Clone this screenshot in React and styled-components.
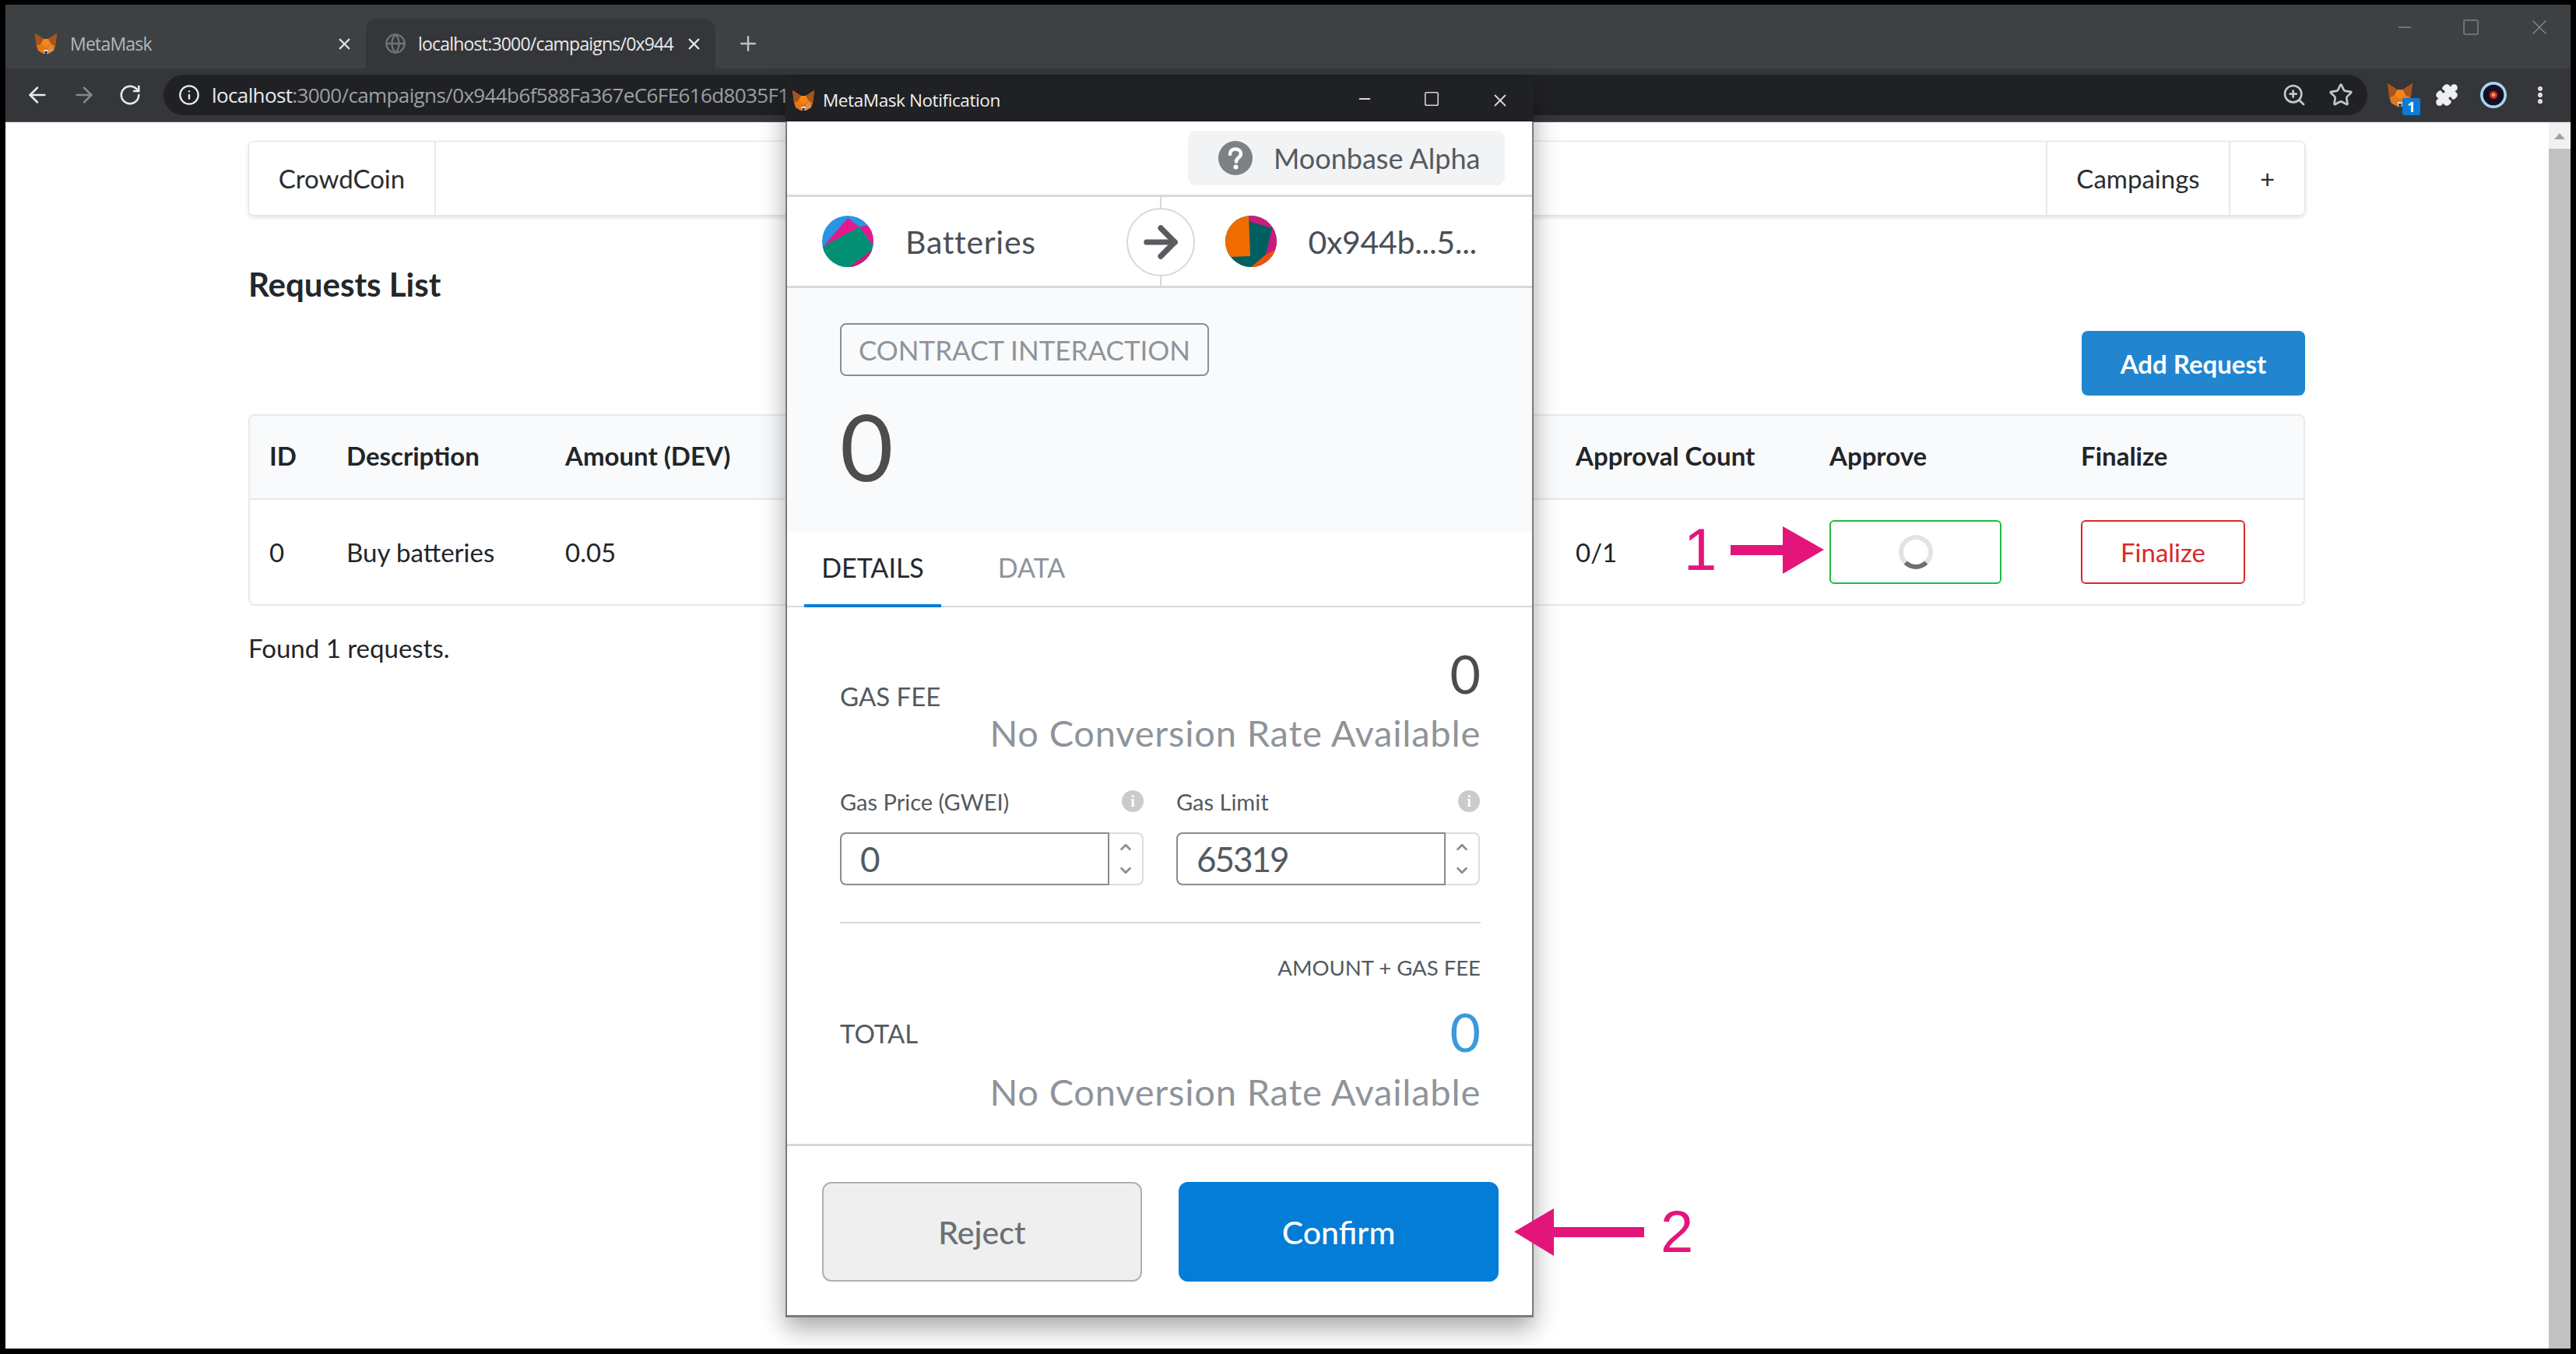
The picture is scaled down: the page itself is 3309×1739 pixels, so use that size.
import React from 'react';
import styled, { createGlobalStyle } from 'styled-components';
import { ArrowLeft, ArrowRight, RotateCw, Info, X, Plus, Globe, ZoomIn, Star, Puzzle, MoreVertical, Minus, Square, ChevronUp, ChevronDown } from 'lucide-react';

const Global = createGlobalStyle`
  html, body { margin: 0; padding: 0; background: #000; }
  * { box-sizing: border-box; }
`;

const Frame = styled.div`
  position: relative; width: 3309px; height: 1739px; background: #000;
  padding: 6px 7px 7px 7px; overflow: hidden;
  display: flex; flex-direction: column;
`;
const TabStrip = styled.div`
  height: 82px; background: #3e4144; display: flex; align-items: flex-end; padding-top: 18px; flex: none;
  font-family: "Open Sans", sans-serif; font-size: 23px; letter-spacing: -0.8px;
`;
const Tab = styled.div`
  display: flex; align-items: center; height: 64px; padding: 0 ${p => p.$pr}px 0 ${p => p.$pl}px;
  width: ${p => p.$w}px; flex: none; border-radius: 14px 14px 0 0;
  background: ${p => p.$active ? '#35363a' : 'transparent'};
  color: ${p => p.$active ? '#e8eaed' : '#b4b7bb'};
`;
const TabTitle = styled.span`
  flex: 1; min-width: 0; white-space: nowrap; margin-left: ${p => p.$ml}px;
`;
const NewTab = styled.div`
  margin-left: 20px; width: 44px; height: 64px; display: flex; align-items: center; justify-content: center; color: #bdc1c6;
`;
const WinControls = styled.div`
  margin-left: auto; align-self: flex-start; display: flex; align-items: center; gap: 60px; padding: 0 24px 0 0; margin-top: -5px; color: #7f8285;
`;
const Toolbar = styled.div`
  height: 69px; background: #35363a; flex: none; display: flex; align-items: center; padding: 0 10px 0 25px;
  border-bottom: 1px solid #55575a;
`;
const NavIcon = styled.span`
  width: 60px; display: flex; color: ${p => p.$dim ? '#85888c' : '#e8eaed'}; flex: none;
`;
const Omnibox = styled.div`
  margin-left: -2px; width: 2831px; height: 52px; border-radius: 26px; background: #202124; flex: none;
  display: flex; align-items: center; padding: 0 0 0 19px; color: #e8eaed; position: relative;
`;
const Url = styled.span`
  margin-left: 15px; font-family: "Open Sans", sans-serif; font-size: 26px; letter-spacing: -0.62px; white-space: nowrap; color: #e8eaed;
  & > em { font-style: normal; color: #9aa0a6; }
`;
const OmniEnd = styled.div`
  margin-left: auto; display: flex; gap: 28px; align-items: center; padding-right: 18px; color: #c4c7ca;
`;
const ExtArea = styled.div`
  display: flex; align-items: center; flex: none; margin-left: 25px; gap: 26px; color: #eef0f2;
`;
const ExtSlot = styled.span`
  position: relative; display: flex; width: 34px; height: 34px; align-items: center; justify-content: center;
`;
const ExtBadge = styled.span`
  position: absolute; right: -9px; bottom: -9px; width: 23px; height: 22px; background: #0a7bd6; color: #fff; border-radius: 2px;
  font: 700 18px/22px "Open Sans", sans-serif; text-align: center; letter-spacing: 0;
`;
const Viewport = styled.div`
  flex: 1; min-height: 0; background: #fff; display: flex;
`;
const Page = styled.div`
  flex: 1; min-width: 0; padding: 24px 313px 0 312px;
  font-family: Lato, sans-serif; color: #212529; font-size: 33px;
`;
const Scrollbar = styled.div`
  width: 28px; flex: none; background: #f1f1f1; display: flex; flex-direction: column; align-items: center; padding-top: 14px;
`;
const ScrollArrow = styled.div`
  width: 0; height: 0; border-left: 7px solid transparent; border-right: 7px solid transparent; border-bottom: 8px solid #a3a3a3;
`;
const ScrollThumb = styled.div`
  width: 100%; flex: 1; background: #c1c1c1; margin-top: 12px;
`;
const Menu = styled.div`
  height: 96px; border: 1px solid #e2e3e4; border-radius: 7px; box-shadow: 0 2px 5px rgba(34,36,38,.15);
  display: flex; background: #fff;
`;
const MenuItem = styled.div`
  display: flex; align-items: center; justify-content: center; width: ${p => p.$w}px;
  ${p => p.$right ? 'border-left: 2px solid #e9e9ea;' : 'border-right: 2px solid #e9e9ea;'}
  color: #2b2d2f;
`;
const MenuRight = styled.div`
  margin-left: auto; display: flex;
`;
const PageTitle = styled.h2`
  margin: 63px 0 0; font-size: 42px; line-height: 50px; font-weight: 700; color: #23272b;
`;
const ActionRow = styled.div`
  display: flex; justify-content: flex-end; margin-top: 35px;
`;
const AddButton = styled.button`
  width: 287px; height: 83px; border: 0; border-radius: 8px; background: #2185d0; color: #fff;
  font: 700 33px Lato, sans-serif;
`;
const Table = styled.div`
  margin-top: 24px; border: 2px solid #e8e9ea; border-radius: 8px; overflow: hidden;
`;
const TableRow = styled.div`
  display: grid; grid-template-columns: 99px 281px 1298px 326px 323px 1fr; align-items: center; padding-left: 25px;
  height: ${p => p.$head ? 108 : 134}px;
  ${p => p.$head ? 'background: #f9fafb; border-bottom: 2px solid #e8e9ea; font-weight: 700; padding-bottom: 4px;' : ''}
`;
const FoundText = styled.p`
  margin: 34px 0 0; line-height: 40px;
`;
const OutlineButton = styled.button`
  height: 82px; width: ${p => p.$w}px; background: #fff; border: 2px solid ${p => p.$color}; border-radius: 6px;
  color: ${p => p.$color}; font: 33px Lato, sans-serif; display: flex; align-items: center; justify-content: center; padding: 0;
`;
const Spinner = styled.span`
  width: 44px; height: 44px; border-radius: 50%; border: 6px solid #e3e3e3; border-bottom-color: #6e6e6e;
`;

/* MetaMask window */
const Popup = styled.div`
  position: absolute; left: 1009px; top: 101px; width: 961px; height: 1591px; background: #fff;
  box-shadow: 0 14px 30px rgba(0,0,0,.35); border: solid #7a7a7a; border-width: 0 2px 3px 2px;
  display: flex; flex-direction: column; font-family: Lato, sans-serif; color: #535a61;
`;
const PopTitle = styled.div`
  height: 55px; flex: none; background: #202124; margin: 0 -2px; display: flex; align-items: center; padding: 0 0 0 8px;
  color: #f1f1f1; font: 22.5px "Open Sans", sans-serif; letter-spacing: -0.4px;
`;
const PopTitleText = styled.span` margin-left: 10px; `;
const PopWinBtns = styled.div`
  margin-left: auto; display: flex; gap: 64px; padding-right: 30px; color: #d8d8d8;
`;
const NetBar = styled.div`
  height: 97px; flex: none; display: flex; justify-content: flex-end; align-items: flex-start; padding: 12px 35px 0 0;
  border-bottom: 3px solid #d6d9dc;
`;
const NetPill = styled.div`
  width: 407px; height: 70px; border-radius: 10px; background: #f2f3f4; display: flex; align-items: center; padding-left: 39px;
  font-size: 36px; color: #535a61; gap: 27px;
`;
const Parties = styled.div`
  position: relative; height: 117px; flex: none; display: flex; align-items: center; border-bottom: 3px solid #d6d9dc; font-size: 41px; color: #4a4f55;
`;
const Party = styled.div`
  flex: 1; display: flex; align-items: center; padding-left: ${p => p.$pl}px; gap: ${p => p.$gap}px; letter-spacing: ${p => p.$ls}px;
`;
const ArrowCircle = styled.div`
  position: absolute; left: 436px; top: 14px; width: 88px; height: 88px; border-radius: 50%; border: 2px solid #d6d9dc; background: #fff;
  display: flex; align-items: center; justify-content: center; color: #595b5e;
`;
const VLine = styled.div`
  position: absolute; left: 479px; width: 2px; height: 14px; background: #d6d9dc; top: ${p => p.$top}px;
`;
const Summary = styled.div`
  height: 314px; flex: none; background: #f9fafb; padding: 45px 0 0 68px;
`;
const Badge = styled.div`
  width: 474px; height: 68px; border: 2px solid #8a8f94; border-radius: 8px; display: flex; align-items: center; justify-content: center;
  font-size: 35px; color: #8e949a; white-space: nowrap;
`;
const BigZero = styled.div`
  font-size: 118px; line-height: 120px; margin-top: 30px; color: #4d4d4d; font-weight: 400;
`;
const Tabs = styled.div`
  height: 96px; flex: none; display: flex; border-bottom: 2px solid #d6d9dc; padding-left: 22px;
`;
const TabLink = styled.div`
  width: 176px; height: 96px; display: flex; align-items: center; justify-content: center; font-size: 34px;
  color: ${p => p.$active ? '#24292e' : '#8e949a'};
  ${p => p.$active ? 'border-bottom: 4px solid #037dd6; padding-bottom: 4px;' : 'padding-bottom: 8px;'}
  margin-right: ${p => p.$mr || 0}px;
`;
const Details = styled.div`
  flex: 1; padding: 0 66px 0 68px; display: flex; flex-direction: column;
`;
const FeeRow = styled.div`
  display: flex; flex-direction: column;
`;
const FeeTop = styled.div`
  display: flex; justify-content: space-between; align-items: center; height: ${p => p.$h}px; margin-top: ${p => p.$mt}px;
`;
const FeeLabel = styled.span`
  font-size: 33px; color: #535a61; margin-top: ${p => p.$drop || 0}px;
`;
const FeeValue = styled.span`
  font-size: 68px; line-height: 68px; color: ${p => p.$blue ? '#3b99dc' : '#4d4d4d'};
`;
const Conversion = styled.div`
  text-align: right; font-size: 47px; line-height: 56px; margin-top: ${p => p.$mt}px; color: #8e949a; white-space: nowrap; letter-spacing: 0.8px;
`;
const GasGrid = styled.div`
  display: grid; grid-template-columns: 390px 390px; gap: 42px; margin-top: 42px;
`;
const GasField = styled.div` display: flex; flex-direction: column; `;
const GasLabel = styled.div`
  display: flex; justify-content: space-between; align-items: center; height: 36px; font-size: 29px; color: #535a61; padding-right: 0;
`;
const InfoDot = styled.span`
  width: 28px; height: 28px; border-radius: 50%; background: #c9cbcd; color: #fff; text-align: center;
  font: 700 20px/28px "Liberation Serif", serif;
`;
const Stepper = styled.div`
  display: flex; height: 68px; margin-top: 22px; border: 2px solid #dcdcdc; border-radius: 8px;
`;
const GasInput = styled.div`
  width: 346px; margin: -2px 0 -2px -2px; border: 2px solid #898d91; border-radius: 8px 0 0 8px;
  font-size: 44px; line-height: 64px; padding-left: 24px; color: #535a61; letter-spacing: -2px;
`;
const Spin = styled.div`
  flex: 1; display: flex; flex-direction: column; align-items: center; justify-content: center; gap: 8px; color: #8a8f94;
`;
const Rule = styled.div`
  height: 2px; background: #d6d9dc; margin-top: 47px;
`;
const AmountNote = styled.div`
  text-align: right; font-size: 27.5px; line-height: 36px; margin-top: 39px; color: #535a61;
`;
const Footer = styled.div`
  height: 220px; flex: none; border-top: 3px solid #d6d9dc; display: flex; gap: 47px; padding: 46px 0 0 45px;
`;
const FootBtn = styled.button`
  width: 411px; height: 128px; border-radius: 12px; font: 500 41px Lato, sans-serif;
  border: ${p => p.$primary ? '0' : '2px solid #b0b0b0'};
  background: ${p => p.$primary ? '#037dd6' : '#efefef'};
  color: ${p => p.$primary ? '#fff' : '#6b7075'};
`;
const Callout = styled.div`
  position: absolute; left: ${p => p.$x}px; top: ${p => p.$y}px; display: flex; align-items: center; gap: ${p => p.$gap}px;
  font: 76px/76px "Liberation Sans", sans-serif; color: #e3157a;
`;

const Fox = ({ size = 30 }) => (
  <svg width={size} height={size} viewBox="0 0 30 30">
    <polygon points="1,2 12,9 18,9 29,2 27,18 25,24 18,28 12,28 5,24 3,18" fill="#e2761b" />
    <polygon points="1,2 12,9 9,15 3,18" fill="#a8541a" />
    <polygon points="29,2 18,9 21,15 27,18" fill="#a8541a" />
    <polygon points="12,9 18,9 21,15 15,20 9,15" fill="#f6851b" />
    <polygon points="5,24 12,28 12,23 9,15" fill="#e4761b" />
    <polygon points="25,24 18,28 18,23 21,15" fill="#d7c1b3" opacity=".35" />
    <polygon points="12,23 18,23 17,28 13,28" fill="#e8dcd2" />
    <polygon points="13,25 17,25 16,28 14,28" fill="#2b2b2b" />
  </svg>
);

const Jazzicon = ({ variant }) => (
  <svg width="66" height="66" viewBox="0 0 66 66">
    <defs>
      <clipPath id={`j${variant}`}><circle cx="33" cy="33" r="33" /></clipPath>
    </defs>
    {variant === 'a' ? (
      <g clipPath="url(#ja)">
        <rect width="66" height="66" fill="#2a95e2" />
        <polygon points="33,3 48,14.600 2,39" fill="#e6188e" />
        <polygon points="48,14.600 58,12 68,24 66,39" fill="#e6188e" />
        <polygon points="-4,42 48,14.600 66,39 66,44 35,66 0,66" fill="#038f73" />
        <polygon points="35,66 64,44 68,68" fill="#c81d7d" />
      </g>
    ) : (
      <g clipPath="url(#jb)">
        <rect width="66" height="66" fill="#005f5f" />
        <polygon points="-2,-2 30,-2 32,52 5,53 -2,50" fill="#f06c00" />
        <polygon points="30,-2 30,7 60,16 68,-2" fill="#c81d7d" />
        <polygon points="60,16 68,16 68,44 52,50" fill="#c81d7d" />
        <polygon points="33,66 52,50 64,44 68,68" fill="#f2500a" />
      </g>
    )}
  </svg>
);

const Qmark = () => (
  <svg width="44" height="44" viewBox="0 0 44 44">
    <circle cx="22" cy="22" r="22" fill="#7d8185" />
    <path d="M15 17c0-4 3-6.500 7-6.500s7 2.500 7 6c0 5-6 5-6 10" fill="none" stroke="#fff" strokeWidth="4.500" strokeLinecap="round" />
    <circle cx="22.500" cy="33.500" r="3" fill="#fff" />
  </svg>
);

const CalloutArrow = ({ dir }) => (
  <svg width={dir === 'r' ? 120 : 167} height="61" viewBox={dir === 'r' ? '0 0 120 61' : '0 0 167 61'}>
    {dir === 'r'
      ? <polygon points="0,24 67,24 67,0 120,30 67,61 67,37 0,37" fill="#e3157a" />
      : <polygon points="167,24 51,24 51,0 0,30 51,61 51,37 167,37" fill="#e3157a" />}
  </svg>
);

const Avatar = () => (
  <svg width="42" height="42" viewBox="0 0 42 42">
    <circle cx="21" cy="21" r="21" fill="#a9d3f1" />
    <circle cx="21" cy="21" r="16.500" fill="#14111d" />
    <circle cx="21" cy="21" r="6.500" fill="#c2213f" />
    <circle cx="21" cy="21" r="3" fill="#f9a43a" />
  </svg>
);

export default function App() {
  return (
    <>
      <Global />
      <Frame>
        <TabStrip>
          <Tab $w={463} $pl={37} $pr={16}>
            <Fox />
            <TabTitle $ml={16}>MetaMask</TabTitle>
            <X size={23} strokeWidth={2.500} color="#dfe1e5" />
          </Tab>
          <Tab $active $w={449} $pl={24} $pr={16}>
            <Globe size={28} color="#6f7276" />
            <TabTitle $ml={15}>localhost:3000/campaigns/0x944</TabTitle>
            <X size={23} strokeWidth={2.500} color="#e8eaed" />
          </Tab>
          <NewTab><Plus size={30} /></NewTab>
          <WinControls>
            <Minus size={26} strokeWidth={1.500} />
            <Square size={24} strokeWidth={1.500} />
            <X size={32} strokeWidth={1.200} />
          </WinControls>
        </TabStrip>
        <Toolbar>
          <NavIcon><ArrowLeft size={32} /></NavIcon>
          <NavIcon $dim><ArrowRight size={32} /></NavIcon>
          <NavIcon><RotateCw size={30} /></NavIcon>
          <Omnibox>
            <Info size={28} />
            <Url>localhost<em>:3000/campaigns/0x944b6f588Fa367eC6FE616d8035F1</em></Url>
            <OmniEnd>
              <ZoomIn size={32} />
              <Star size={32} />
            </OmniEnd>
          </Omnibox>
          <ExtArea>
            <ExtSlot><Fox size={34} /><ExtBadge>1</ExtBadge></ExtSlot>
            <ExtSlot><Puzzle size={30} fill="#eef0f2" /></ExtSlot>
            <ExtSlot><Avatar /></ExtSlot>
            <ExtSlot><MoreVertical size={28} strokeWidth={3} /></ExtSlot>
          </ExtArea>
        </Toolbar>
        <Viewport>
          <Page>
            <Menu>
              <MenuItem $w={240}>CrowdCoin</MenuItem>
              <MenuRight>
                <MenuItem $right $w={235}>Campaings</MenuItem>
                <MenuItem $right $w={97}>+</MenuItem>
              </MenuRight>
            </Menu>
            <PageTitle>Requests List</PageTitle>
            <ActionRow><AddButton>Add Request</AddButton></ActionRow>
            <Table>
              <TableRow $head>
                <span>ID</span><span>Description</span><span>Amount (DEV)</span>
                <span>Approval Count</span><span>Approve</span><span>Finalize</span>
              </TableRow>
              <TableRow>
                <span>0</span><span>Buy batteries</span><span>0.05</span>
                <span>0/1</span>
                <OutlineButton $w={221} $color="#21ba45"><Spinner /></OutlineButton>
                <OutlineButton $w={211} $color="#db2828">Finalize</OutlineButton>
              </TableRow>
            </Table>
            <FoundText>Found 1 requests.</FoundText>
          </Page>
          <Scrollbar><ScrollArrow /><ScrollThumb /></Scrollbar>
        </Viewport>

        <Popup>
          <PopTitle>
            <Fox size={30} />
            <PopTitleText>MetaMask Notification</PopTitleText>
            <PopWinBtns>
              <Minus size={22} />
              <Square size={22} strokeWidth={1.700} />
              <X size={26} strokeWidth={1.700} />
            </PopWinBtns>
          </PopTitle>
          <NetBar>
            <NetPill><Qmark />Moonbase Alpha</NetPill>
          </NetBar>
          <Parties>
            <Party $pl={45} $gap={41} $ls={0.7}><Jazzicon variant="a" />Batteries</Party>
            <Party $pl={123} $gap={41} $ls={-0.3}><Jazzicon variant="b" />0x944b...5...</Party>
            <VLine $top={0} />
            <ArrowCircle><ArrowRight size={62} strokeWidth={2.800} /></ArrowCircle>
            <VLine $top={101} />
          </Parties>
          <Summary>
            <Badge>CONTRACT INTERACTION</Badge>
            <BigZero>0</BigZero>
          </Summary>
          <Tabs>
            <TabLink $active $mr={28}>DETAILS</TabLink>
            <TabLink>DATA</TabLink>
          </Tabs>
          <Details>
            <FeeRow>
              <FeeTop $h={80} $mt={45}><FeeLabel $drop={58}>GAS FEE</FeeLabel><FeeValue>0</FeeValue></FeeTop>
              <Conversion $mt={8}>No Conversion Rate Available</Conversion>
            </FeeRow>
            <GasGrid>
              <GasField>
                <GasLabel>Gas Price (GWEI)<InfoDot>i</InfoDot></GasLabel>
                <Stepper>
                  <GasInput>0</GasInput>
                  <Spin><ChevronUp size={22} strokeWidth={3} /><ChevronDown size={22} strokeWidth={3} /></Spin>
                </Stepper>
              </GasField>
              <GasField>
                <GasLabel>Gas Limit<InfoDot>i</InfoDot></GasLabel>
                <Stepper>
                  <GasInput>65319</GasInput>
                  <Spin><ChevronUp size={22} strokeWidth={3} /><ChevronDown size={22} strokeWidth={3} /></Spin>
                </Stepper>
              </GasField>
            </GasGrid>
            <Rule />
            <AmountNote>AMOUNT + GAS FEE</AmountNote>
            <FeeRow>
              <FeeTop $h={70} $mt={29}><FeeLabel $drop={4}>TOTAL</FeeLabel><FeeValue $blue>0</FeeValue></FeeTop>
              <Conversion $mt={14}>No Conversion Rate Available</Conversion>
            </FeeRow>
          </Details>
          <Footer>
            <FootBtn>Reject</FootBtn>
            <FootBtn $primary>Confirm</FootBtn>
          </Footer>
        </Popup>

        <Callout $x={2163} $y={668} $gap={18}><span>1</span><CalloutArrow dir="r" /></Callout>
        <Callout $x={1945} $y={1544} $gap={21}><CalloutArrow dir="l" /><span>2</span></Callout>
      </Frame>
    </>
  );
}
